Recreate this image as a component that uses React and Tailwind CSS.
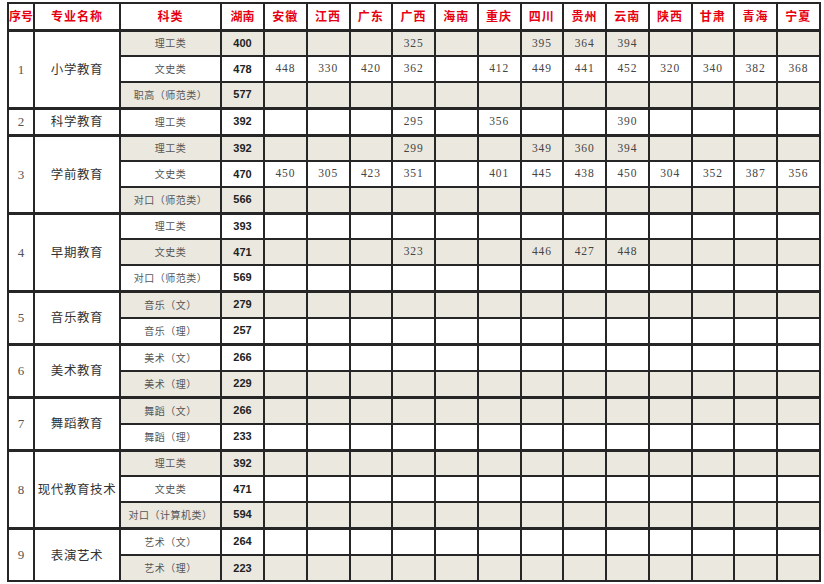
import React from 'react';

const provinces = ['安徽', '江西', '广东', '广西', '海南', '重庆', '四川', '贵州', '云南', '陕西', '甘肃', '青海', '宁夏'];

// 每行: 科类, 湖南, 是否底色, 其余省份分数
const groups = [
  {
    no: '1', name: '小学教育', rows: [
      ['理工类', '400', true, ['', '', '', '325', '', '', '395', '364', '394', '', '', '', '']],
      ['文史类', '478', false, ['448', '330', '420', '362', '', '412', '449', '441', '452', '320', '340', '382', '368']],
      ['职高（师范类）', '577', true, []],
    ],
  },
  {
    no: '2', name: '科学教育', rows: [
      ['理工类', '392', false, ['', '', '', '295', '', '356', '', '', '390', '', '', '', '']],
    ],
  },
  {
    no: '3', name: '学前教育', rows: [
      ['理工类', '392', true, ['', '', '', '299', '', '', '349', '360', '394', '', '', '', '']],
      ['文史类', '470', false, ['450', '305', '423', '351', '', '401', '445', '438', '450', '304', '352', '387', '356']],
      ['对口（师范类）', '566', true, []],
    ],
  },
  {
    no: '4', name: '早期教育', rows: [
      ['理工类', '393', false, []],
      ['文史类', '471', true, ['', '', '', '323', '', '', '446', '427', '448', '', '', '', '']],
      ['对口（师范类）', '569', false, []],
    ],
  },
  {
    no: '5', name: '音乐教育', rows: [
      ['音乐（文）', '279', true, []],
      ['音乐（理）', '257', false, []],
    ],
  },
  {
    no: '6', name: '美术教育', rows: [
      ['美术（文）', '266', false, []],
      ['美术（理）', '229', true, []],
    ],
  },
  {
    no: '7', name: '舞蹈教育', rows: [
      ['舞蹈（文）', '266', true, []],
      ['舞蹈（理）', '233', false, []],
    ],
  },
  {
    no: '8', name: '现代教育技术', rows: [
      ['理工类', '392', true, []],
      ['文史类', '471', false, []],
      ['对口（计算机类）', '594', true, []],
    ],
  },
  {
    no: '9', name: '表演艺术', rows: [
      ['艺术（文）', '264', false, []],
      ['艺术（理）', '223', true, []],
    ],
  },
];

const cell = 'border-2 border-[#262626] p-0 text-center align-middle';

const App = () => {
  return (
    <div className="w-[824px] h-[584px] bg-white overflow-hidden pt-[2px] pl-[7px]">
      <table className="border-collapse table-fixed w-[812px] [font-family:'Noto_Sans_CJK_SC',sans-serif]">
        <colgroup>
          <col className="w-[26px]" />
          <col className="w-[86px]" />
          <col className="w-[101px]" />
          <col className="w-[43px]" />
          {provinces.map((p) => (
            <col key={p} className="w-[42.75px]" />
          ))}
        </colgroup>
        <thead>
          <tr className="h-[27px] text-[12px] font-bold text-[#e60012] leading-none">
            <th className={cell}>序号</th>
            <th className={cell + ' tracking-[1px]'}>专业名称</th>
            <th className={cell + ' tracking-[1px]'}>科类</th>
            <th className={cell}>湖南</th>
            {provinces.map((p) => (
              <th key={p} className={cell + ' tracking-[1px]'}>{p}</th>
            ))}
          </tr>
        </thead>
        <tbody>
          {groups.map((g) =>
            g.rows.map((r, i) => {
              const [cat, hn, shade, vals] = r;
              const top = i === 0 ? ' border-t-[3px]' : '';
              const bg = shade ? ' bg-[#ebe8df]' : ' bg-white';
              const h = i === 0 && g.rows.length < 3 ? 'h-[27px]' : 'h-[26px]';
              return (
                <tr key={g.no + '-' + i} className={h + ' leading-none'}>
                  {i === 0 && (
                    <>
                      <td rowSpan={g.rows.length} className={cell + top + " bg-white text-[13px] text-[#555] [font-family:'Liberation_Serif',serif]"}>
                        {g.no}
                      </td>
                      <td rowSpan={g.rows.length} className={cell + top + ' bg-white text-[12.5px] text-[#333] tracking-[0.6px]'}>
                        {g.name}
                      </td>
                    </>
                  )}
                  <td className={cell + top + bg + ' text-[10px] text-[#555] tracking-[0.5px]'}>{cat}</td>
                  <td className={cell + top + bg + " text-[11px] font-bold text-[#222] [font-family:'Liberation_Sans',sans-serif]"}>{hn}</td>
                  {provinces.map((p, j) => (
                    <td key={p} className={cell + top + bg + " text-[11.5px] text-[#444] tracking-[0.8px] [font-family:'Liberation_Serif',serif]"}>
                      {vals[j] || ''}
                    </td>
                  ))}
                </tr>
              );
            })
          )}
        </tbody>
      </table>
    </div>
  );
};

export default App;
